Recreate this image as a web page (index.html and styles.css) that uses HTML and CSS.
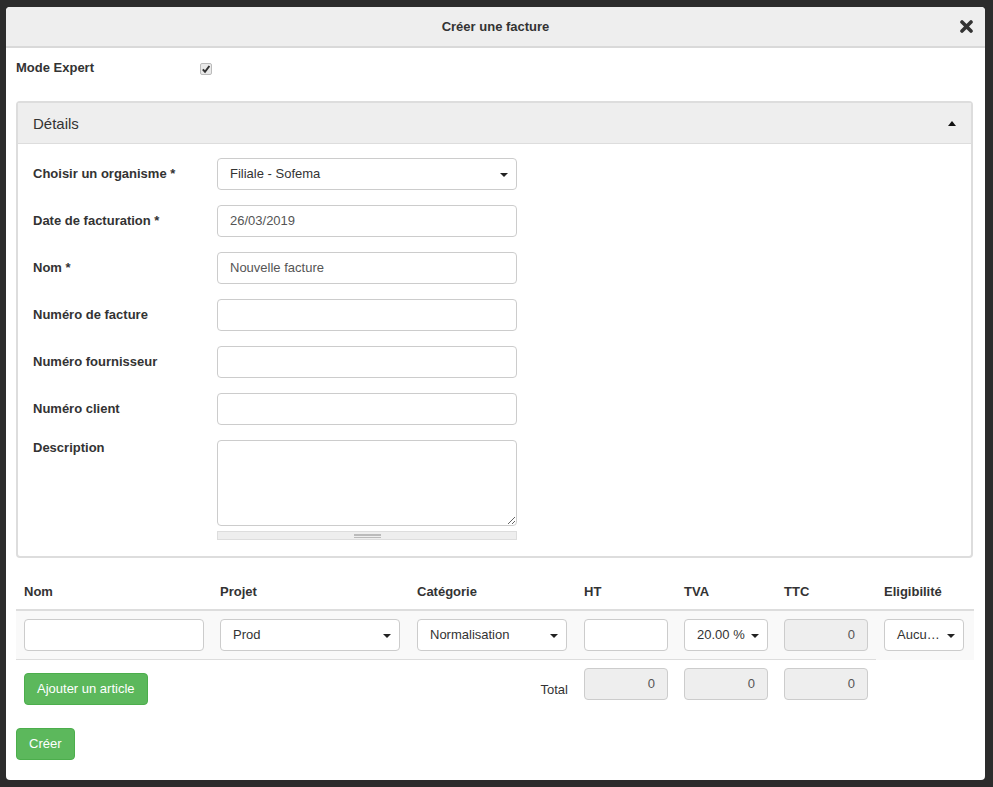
FILE: index.html
```html
<!DOCTYPE html>
<html lang="fr">
<head>
<meta charset="utf-8">
<title>Créer une facture</title>
<link rel="stylesheet" href="styles.css">
</head>
<body>
<div class="modal">
  <div class="modal-header">
    <span class="modal-title">Créer une facture</span>
    <span class="close" aria-label="Fermer">
      <svg width="13" height="13" viewBox="0 0 13 13"><path d="M2 2 L11 11 M11 2 L2 11" stroke="#333" stroke-width="3.6" stroke-linecap="round"/></svg>
    </span>
  </div>
  <div class="modal-body">
    <div class="expert-row">
      <span class="expert-label">Mode Expert</span>
      <span class="checkbox">
        <svg width="10" height="10" viewBox="0 0 10 10"><path d="M1.8 5.4 L4 7.8 L8.4 2" fill="none" stroke="#333" stroke-width="2"/></svg>
      </span>
    </div>

    <div class="panel">
      <div class="panel-heading">
        <span>Détails</span>
        <span class="caret-up"></span>
      </div>
      <div class="panel-body">
        <div class="form-row">
          <label class="form-label">Choisir un organisme *</label>
          <div class="control select">Filiale - Sofema<span class="caret"></span></div>
        </div>
        <div class="form-row">
          <label class="form-label">Date de facturation *</label>
          <div class="control">26/03/2019</div>
        </div>
        <div class="form-row">
          <label class="form-label">Nom *</label>
          <div class="control">Nouvelle facture</div>
        </div>
        <div class="form-row">
          <label class="form-label">Numéro de facture</label>
          <div class="control"></div>
        </div>
        <div class="form-row">
          <label class="form-label">Numéro fournisseur</label>
          <div class="control"></div>
        </div>
        <div class="form-row">
          <label class="form-label">Numéro client</label>
          <div class="control"></div>
        </div>
        <div class="form-row last">
          <label class="form-label desc">Description</label>
          <div class="desc-wrap">
            <textarea class="textarea"></textarea>
            <div class="resize-bar"><span class="grip"></span></div>
          </div>
        </div>
      </div>
    </div>

    <table class="items">
      <colgroup>
        <col style="width:196px"><col style="width:197px"><col style="width:167px"><col style="width:100px"><col style="width:100px"><col style="width:100px"><col style="width:98px">
      </colgroup>
      <thead>
        <tr>
          <th>Nom</th><th>Projet</th><th>Catégorie</th><th>HT</th><th>TVA</th><th>TTC</th><th>Eligibilité</th>
        </tr>
      </thead>
      <tbody>
        <tr class="item-row">
          <td><div class="control w180"></div></td>
          <td><div class="control select w180">Prod<span class="caret"></span></div></td>
          <td><div class="control select w150">Normalisation<span class="caret"></span></div></td>
          <td><div class="control w84"></div></td>
          <td><div class="control select w84">20.00 %<span class="caret"></span></div></td>
          <td><div class="control disabled w84">0</div></td>
          <td class="noborder"><div class="control select w80">Aucu…<span class="caret"></span></div></td>
        </tr>
        <tr class="total-row">
          <td colspan="2" class="btn-cell"><button class="btn">Ajouter un article</button></td>
          <td class="total-label">Total</td>
          <td><div class="control disabled w84">0</div></td>
          <td><div class="control disabled w84">0</div></td>
          <td><div class="control disabled w84">0</div></td>
          <td></td>
        </tr>
      </tbody>
    </table>

    <button class="btn create">Créer</button>
  </div>
</div>
</body>
</html>
```

FILE: styles.css
```css
* { box-sizing: border-box; }

html, body {
  margin: 0;
  padding: 0;
  background: #2c2c2c;
  font-family: "Liberation Sans", Arial, Helvetica, sans-serif;
  font-size: 13px;
  color: #333;
}

body {
  padding: 7px 8px 0 6px;
  height: 787px;
  overflow: hidden;
}

.modal {
  width: 979px;
  height: 773px;
  background: #fff;
  border-radius: 4px;
  overflow: hidden;
}

.modal-header {
  position: relative;
  height: 41px;
  background: #eee;
  border-bottom: 2px solid #d9d9d9;
  padding: 10px 0;
  line-height: 19px;
  text-align: center;
}

.modal-title {
  font-weight: bold;
  font-size: 13px;
}

.close {
  position: absolute;
  right: 12px;
  top: 13px;
  width: 13px;
  height: 13px;
  line-height: 0;
}

.modal-body {
  padding: 10px 11px 20px 10px;
}

.expert-row {
  display: flex;
  align-items: center;
  height: 20px;
  line-height: 20px;
}

.expert-label {
  font-weight: bold;
  width: 184px;
}

.checkbox {
  width: 12px;
  height: 12px;
  margin-top: 2px;
  border: 1px solid #bbb;
  border-radius: 2px;
  background: #e9e9e9;
  display: flex;
  align-items: center;
  justify-content: center;
  line-height: 0;
}

.panel {
  margin-top: 23px;
  width: 957px;
  border: 2px solid #ddd;
  border-radius: 4px;
}

.panel-heading {
  display: flex;
  justify-content: space-between;
  align-items: center;
  height: 41px;
  padding: 0 15px;
  background: #eee;
  border-bottom: 1px solid #ddd;
  font-size: 15px;
}

.caret-up {
  width: 0;
  height: 0;
  border-left: 4px solid transparent;
  border-right: 4px solid transparent;
  border-bottom: 5px solid #111;
}

.panel-body {
  padding: 14px 15px 16px 15px;
}

.form-row {
  display: flex;
  align-items: flex-start;
  margin-bottom: 15px;
}

.form-row.last { margin-bottom: 0; }

.form-label {
  width: 184px;
  flex: none;
  font-weight: bold;
  line-height: 20px;
  padding-top: 6px;
}

.form-label.desc {
  padding-top: 0;
  line-height: 16px;
}

.control {
  position: relative;
  width: 300px;
  height: 32px;
  border: 1px solid #ccc;
  border-radius: 4px;
  background: #fff;
  padding: 0 12px;
  line-height: 30px;
  color: #555;
  font-size: 13px;
  white-space: nowrap;
}

.control.select { color: #333; }

.control.disabled {
  background: #eee;
  text-align: right;
}

.caret {
  position: absolute;
  right: 8px;
  top: 14px;
  width: 0;
  height: 0;
  border-left: 4px solid transparent;
  border-right: 4px solid transparent;
  border-top: 4px solid #222;
}

.desc-wrap {
  width: 300px;
  display: flex;
  flex-direction: column;
}

.textarea {
  display: block;
  width: 300px;
  height: 86px;
  border: 1px solid #ccc;
  border-radius: 4px;
  margin: 0;
  padding: 6px 12px;
  font-family: inherit;
  font-size: 13px;
  resize: vertical;
}

.resize-bar {
  margin-top: 5px;
  height: 9px;
  background: #eee;
  border: 1px solid #ddd;
  display: flex;
  justify-content: center;
  align-items: center;
}

.grip {
  width: 27px;
  height: 4px;
  border-top: 1px solid #bbb;
  border-bottom: 1px solid #bbb;
  position: relative;
}

.grip::after {
  content: "";
  position: absolute;
  left: 0;
  right: 0;
  top: 0.5px;
  height: 1px;
  background: #bbb;
}

.items {
  margin-top: 16px;
  border-collapse: collapse;
  table-layout: fixed;
  width: 958px;
}

.items th {
  text-align: left;
  font-weight: bold;
  padding: 8px 8px;
  line-height: 19px;
  border-bottom: 2px solid #ddd;
}

.items td {
  padding: 8px 8px;
  vertical-align: top;
}

.item-row td {
  background: #f9f9f9;
  border-bottom: 1px solid #ddd;
}

.item-row td.noborder { border-bottom: none; }

.w180 { width: 180px; }
.w150 { width: 150px; }
.w84 { width: 84px; }
.w80 { width: 80px; }

.total-row td.btn-cell {
  padding-top: 13px;
  padding-bottom: 3px;
}

.total-row td.total-label {
  text-align: right;
  vertical-align: bottom;
  padding-bottom: 10px;
  line-height: 16px;
}

.btn {
  display: inline-block;
  height: 32px;
  padding: 0 12px;
  background: #5cb85c;
  border: 1px solid #4cae4c;
  border-radius: 4px;
  color: #fff;
  font-family: inherit;
  font-size: 13px;
  line-height: 30px;
  cursor: pointer;
}

.btn.create {
  margin-top: 20px;
}
```
